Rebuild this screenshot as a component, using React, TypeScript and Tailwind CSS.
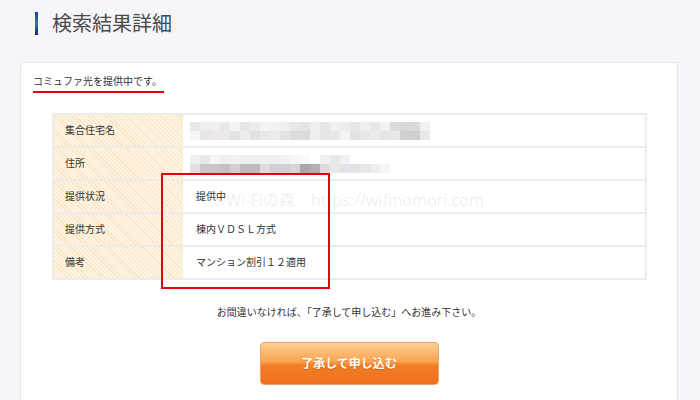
import React from "react"

type Row = {
  label: string
  value?: string
  mosaic?: string[][]
}

const mosaicName = [
  ["#e8e8e8", "#eeeeee", "#f0eeee", "#e8e8e8", "#f4f4f4", "#e6e6e6", "#ececec", "#f4f4f4", "#f2f2f2", "#eeeeee", "#ebe6e6", "#e4e4e4", "#eeeeee", "#e6e6e6", "#f0f0f0", "#ececec", "#e6e6e6", "#f0f0f0", "#e8e8e8", "#f2f2f2", "#dcdcdc", "#d8d6d8", "#dadada", "#f0f0f0"],
  ["#f6f6f6", "#e6e6e6", "#eee8ea", "#eaeaea", "#e4e4e4", "#ececec", "#e2e2e2", "#e8e8e8", "#ececec", "#e4e4e4", "#dcdcdc", "#dcdcdc", "#eeeeee", "#e6e6e6", "#e8e8e8", "#f4f4f4", "#e4e4e4", "#e8e8e8", "#ececec", "#e4e4e4", "#e8e8e8", "#d0d2d2", "#cdd0d0", "#e8e8e8"],
]

const mosaicAddress = [
  ["#f0f0f0", "#e8e8e8", "#f6f6f6", "#f0eeee", "#f2f2f2", "#eeeeee", "#f2eeee", "#f0f0f0", "#eeeeee", "#f2f2f2", "#f6f6f6", "#fafafa", "#ffffff", "#f0f0f0", "#e8e8e8", "#f2f2f2", "#ffffff", "#ffffff", "#ffffff", "#ffffff"],
  ["#e4e0dc", "#c8c8c8", "#c4c8c4", "#c4c0c4", "#d0d0d0", "#bcbcbc", "#bcbcbc", "#dcdcdc", "#d0d0d0", "#d0d0d0", "#d4d8d4", "#a8aaa8", "#b4b0b4", "#dcdcdc", "#e8e8e8", "#e0e4e8", "#e4e4e4", "#e8e8e8", "#eeeeee", "#f6f6f6"],
]

const rows: Row[] = [
  { label: "集合住宅名", mosaic: mosaicName },
  { label: "住所", mosaic: mosaicAddress },
  { label: "提供状況", value: "提供中" },
  { label: "提供方式", value: "棟内ＶＤＳＬ方式" },
  { label: "備考", value: "マンション割引１２適用" },
]

function Mosaic({ cells }: { cells: string[][] }) {
  return (
    <div className="flex flex-col">
      {cells.map((line, i) => (
        <div key={i} className="flex">
          {line.map((c, j) => (
            <div key={j} className="w-[10px] h-[9px]" style={{ backgroundColor: c }} />
          ))}
        </div>
      ))}
    </div>
  )
}

export default function App() {
  return (
    <div
      className="relative w-[700px] h-[400px] overflow-hidden bg-[#f6f6fa] text-[#333]"
      style={{ fontFamily: '"Noto Sans", "Noto Sans CJK JP", sans-serif' }}
    >
      {/* Heading */}
      <div className="flex items-center gap-[14px] pl-[35px] pt-[12px]">
        <div className="w-[3px] h-[23px] bg-[linear-gradient(to_bottom,#1d3f92,#3a6cc8_50%,#0e2b70)]" />
        <h1 className="text-[20px] leading-[23px] text-[#4a4a4a]">検索結果詳細</h1>
      </div>

      {/* Card */}
      <div className="mt-[27px] ml-[20px] w-[658px] h-[400px] bg-white border border-[#e6e6e6] rounded-[3px] pt-[11px]">
        <div className="flex pl-[12px]">
          <span className="text-[10px] leading-[14px] pb-[3px] pr-[2px] border-b-2 border-[#e60012]">
            コミュファ光を提供中です。
          </span>
        </div>

        {/* Table */}
        <div className="ml-[31px] mt-[20px] w-[595px] border-t-2 border-x-2 border-[#ececec]">
          {rows.map((row) => (
            <div key={row.label} className="flex h-[33px] border-b-2 border-[#ececec]">
              <div className="w-[129px] flex items-center pl-[11px] text-[10px] bg-[repeating-linear-gradient(45deg,#fbe4c2_0px,#fbe4c2_1px,#fdf4e4_1px,#fdf4e4_3px)]">
                {row.label}
              </div>
              <div className="flex-1 flex items-center pl-[7px] text-[10px]">
                {row.mosaic ? <Mosaic cells={row.mosaic} /> : <span className="pl-[6px]">{row.value}</span>}
              </div>
            </div>
          ))}
        </div>

        <p className="mt-[25px] text-center text-[10px] leading-[14px] text-[#333]">
          お間違いなければ、「了承して申し込む」へお進み下さい。
        </p>

        <div className="mt-[23px] flex justify-center">
          <button className="w-[179px] h-[43px] rounded-[4px] border border-[#f2a468] bg-[linear-gradient(to_bottom,#fdd095,#f9a450_45%,#f27e26_55%,#ee6f1e)] text-white text-[12px] font-bold [text-shadow:0_1px_1px_rgba(150,60,0,0.4)]">
            了承して申し込む
          </button>
        </div>
      </div>

      {/* Watermark */}
      <div className="absolute left-[213px] top-[189px] text-[16px] leading-[22px] text-[#000]/[0.08] whitespace-pre pointer-events-none">
        ©Wi-Fiの森　https://wifinomori.com
      </div>

      {/* Annotation box */}
      <div className="absolute left-[161px] top-[173px] w-[169px] h-[116px] border-2 border-[#e60012] pointer-events-none" />
    </div>
  )
}
